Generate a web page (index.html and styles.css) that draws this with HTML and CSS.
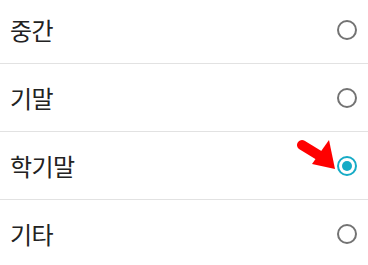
FILE: index.html
```html
<!DOCTYPE html>
<html lang="ko">
<head>
<meta charset="utf-8">
<link rel="stylesheet" href="styles.css">
</head>
<body>
<ul class="list">
  <li class="row"><span class="label">중간</span><span class="radio"></span></li>
  <li class="row"><span class="label">기말</span><span class="radio"></span></li>
  <li class="row"><span class="label">학기말</span><span class="radio checked"></span>
    <svg class="arrow" width="44" height="34" viewBox="0 0 44 34">
      <line x1="6" y1="6" x2="24" y2="17" stroke="#f00" stroke-width="10" stroke-linecap="round"/>
      <polygon points="33,1 16,25 39,30" fill="#f00"/>
    </svg>
  </li>
  <li class="row"><span class="label">기타</span><span class="radio"></span></li>
</ul>
</body>
</html>
```
FILE: styles.css
```css
html, body {
  margin: 0;
  padding: 0;
  background: #fff;
  overflow: hidden;
}
.list {
  list-style: none;
  margin: -4px 0 0 0;
  padding: 0;
  font-family: "Noto Sans CJK KR", "Noto Sans", sans-serif;
}
.row {
  position: relative;
  height: 67px;
  display: flex;
  align-items: center;
  justify-content: space-between;
  padding: 0 11px 0 10px;
  border-bottom: 1px solid #e2e2e2;
}
.label {
  font-size: 24px;
  color: #222;
  letter-spacing: -0.6px;
}
.radio {
  box-sizing: border-box;
  width: 20px;
  height: 20px;
  border: 2px solid #737373;
  border-radius: 50%;
  display: flex;
  align-items: center;
  justify-content: center;
}
.radio.checked {
  border-color: #16abc6;
}
.radio.checked::after {
  content: "";
  width: 10px;
  height: 10px;
  border-radius: 50%;
  background: #16abc6;
}
.arrow {
  position: absolute;
  left: 296px;
  top: 7px;
}
```
